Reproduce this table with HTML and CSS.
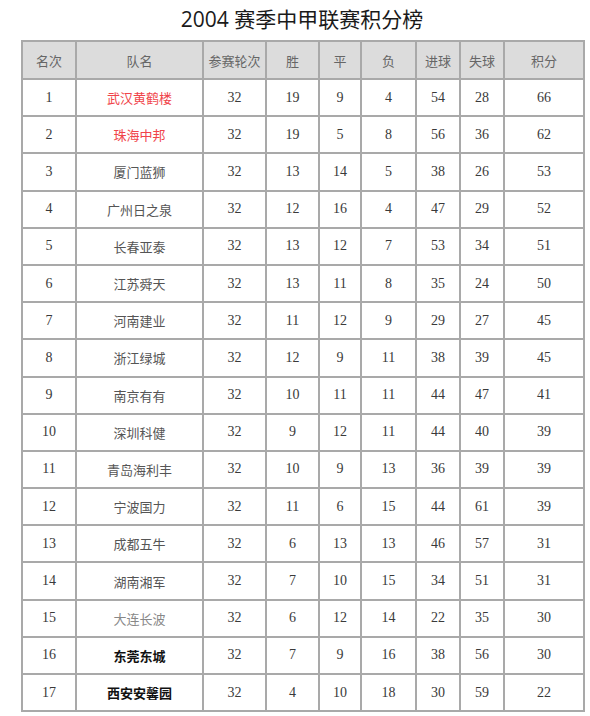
FILE: index.html
```html
<!DOCTYPE html>
<html lang="zh">
<head>
<meta charset="utf-8">
<link rel="stylesheet" href="styles.css">
</head>
<body>
<div class="page">
  <h1 class="title">2004 赛季中甲联赛积分榜</h1>
  <table class="standings">
    <colgroup>
      <col class="c-rank"><col class="c-team"><col class="c-played"><col class="c-w"><col class="c-d"><col class="c-l"><col class="c-gf"><col class="c-ga"><col class="c-pts">
    </colgroup>
    <thead>
      <tr><th>名次</th><th>队名</th><th>参赛轮次</th><th>胜</th><th>平</th><th>负</th><th>进球</th><th>失球</th><th>积分</th></tr>
    </thead>
    <tbody>
      <tr><td>1</td><td class="team red">武汉黄鹤楼</td><td>32</td><td>19</td><td>9</td><td>4</td><td>54</td><td>28</td><td>66</td></tr>
      <tr><td>2</td><td class="team red">珠海中邦</td><td>32</td><td>19</td><td>5</td><td>8</td><td>56</td><td>36</td><td>62</td></tr>
      <tr><td>3</td><td class="team">厦门蓝狮</td><td>32</td><td>13</td><td>14</td><td>5</td><td>38</td><td>26</td><td>53</td></tr>
      <tr><td>4</td><td class="team">广州日之泉</td><td>32</td><td>12</td><td>16</td><td>4</td><td>47</td><td>29</td><td>52</td></tr>
      <tr><td>5</td><td class="team">长春亚泰</td><td>32</td><td>13</td><td>12</td><td>7</td><td>53</td><td>34</td><td>51</td></tr>
      <tr><td>6</td><td class="team">江苏舜天</td><td>32</td><td>13</td><td>11</td><td>8</td><td>35</td><td>24</td><td>50</td></tr>
      <tr><td>7</td><td class="team">河南建业</td><td>32</td><td>11</td><td>12</td><td>9</td><td>29</td><td>27</td><td>45</td></tr>
      <tr><td>8</td><td class="team">浙江绿城</td><td>32</td><td>12</td><td>9</td><td>11</td><td>38</td><td>39</td><td>45</td></tr>
      <tr><td>9</td><td class="team">南京有有</td><td>32</td><td>10</td><td>11</td><td>11</td><td>44</td><td>47</td><td>41</td></tr>
      <tr><td>10</td><td class="team">深圳科健</td><td>32</td><td>9</td><td>12</td><td>11</td><td>44</td><td>40</td><td>39</td></tr>
      <tr><td>11</td><td class="team">青岛海利丰</td><td>32</td><td>10</td><td>9</td><td>13</td><td>36</td><td>39</td><td>39</td></tr>
      <tr><td>12</td><td class="team">宁波国力</td><td>32</td><td>11</td><td>6</td><td>15</td><td>44</td><td>61</td><td>39</td></tr>
      <tr><td>13</td><td class="team">成都五牛</td><td>32</td><td>6</td><td>13</td><td>13</td><td>46</td><td>57</td><td>31</td></tr>
      <tr><td>14</td><td class="team">湖南湘军</td><td>32</td><td>7</td><td>10</td><td>15</td><td>34</td><td>51</td><td>31</td></tr>
      <tr><td>15</td><td class="team grey">大连长波</td><td>32</td><td>6</td><td>12</td><td>14</td><td>22</td><td>35</td><td>30</td></tr>
      <tr><td>16</td><td class="team bold">东莞东城</td><td>32</td><td>7</td><td>9</td><td>16</td><td>38</td><td>56</td><td>30</td></tr>
      <tr><td>17</td><td class="team bold">西安安馨园</td><td>32</td><td>4</td><td>10</td><td>18</td><td>30</td><td>59</td><td>22</td></tr>
    </tbody>
  </table>
</div>
</body>
</html>
```

FILE: styles.css
```css
html, body {
  margin: 0;
  padding: 0;
  background: #ffffff;
}

.page {
  width: 590px;
  padding: 0 0 0 21px;
  box-sizing: border-box;
}

.title {
  margin: 0;
  padding: 6px 0 0 0;
  height: 34px;
  box-sizing: border-box;
  width: 562px;
  text-align: center;
  font-family: "Open Sans", "Noto Sans CJK SC", sans-serif;
  font-weight: 400;
  font-size: 21px;
  line-height: 26px;
  color: #1a1a1a;
}

.standings {
  margin-top: 6px;
  width: 562px;
  border-collapse: collapse;
  table-layout: fixed;
  font-family: "Liberation Serif", "Noto Sans CJK SC", serif;
  font-size: 14px;
  color: #3a3a3a;
}

.c-rank { width: 54px; }
.c-team { width: 127px; }
.c-played { width: 63px; }
.c-w { width: 53px; }
.c-d { width: 42px; }
.c-l { width: 55px; }
.c-gf { width: 44px; }
.c-ga { width: 44px; }
.c-pts { width: 80px; }

.standings th,
.standings td {
  border: 2px solid #a9a9a9;
  text-align: center;
  vertical-align: middle;
  padding: 0;
  height: 35.2px;
}

.standings th {
  background: #dcdcdc;
  font-weight: 400;
  font-size: 13px;
  color: #666666;
  height: 36px;
}

.standings td.team {
  font-size: 13px;
  color: #555555;
}

.standings td.red {
  color: #f0444a;
}

.standings td.grey {
  color: #888888;
}

.standings td.bold {
  font-weight: 700;
  color: #111111;
}
```
